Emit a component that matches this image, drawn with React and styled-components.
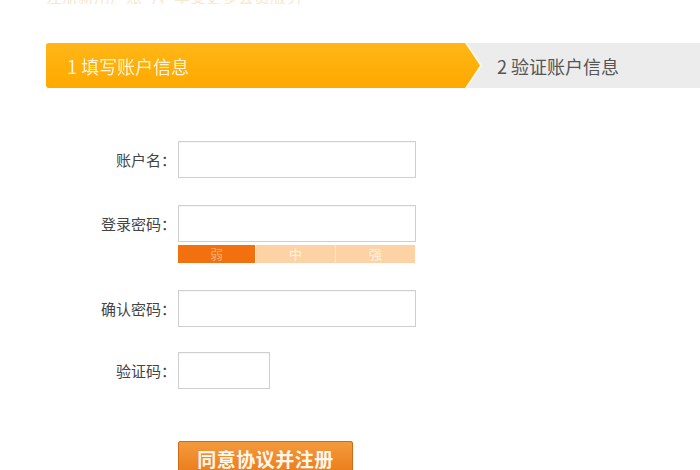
import React from "react";
import styled, { createGlobalStyle } from "styled-components";

const GlobalStyle = createGlobalStyle`
  html, body {
    margin: 0;
    padding: 0;
    background: #ffffff;
    font-family: "Noto Sans CJK SC", "Noto Sans", sans-serif;
  }
`;

const App = () => {
  return (
    <Page>
      <GlobalStyle />
      <TopHint>
        <TopHintText>注册新用户账号，享受更多会员服务</TopHintText>
      </TopHint>
      <StepBar>
        <ActiveWrap>
          <ActiveStep>1 填写账户信息</ActiveStep>
        </ActiveWrap>
        <NextStep>2 验证账户信息</NextStep>
      </StepBar>
      <Form>
        <Row>
          <Label>账户名：</Label>
          <Input type="text" />
        </Row>
        <Row $gap={27}>
          <Label>登录密码：</Label>
          <Input type="password" />
        </Row>
        <StrengthRow>
          <Strength>
            <Level $active>弱</Level>
            <Level>中</Level>
            <Level>强</Level>
          </Strength>
        </StrengthRow>
        <Row $gap={27}>
          <Label>确认密码：</Label>
          <Input type="password" />
        </Row>
        <Row $gap={25}>
          <Label>验证码：</Label>
          <Input type="text" $short />
        </Row>
        <Row $gap={52}>
          <Label />
          <SubmitButton>同意协议并注册</SubmitButton>
        </Row>
      </Form>
    </Page>
  );
};

export default App;

const Page = styled.div`
  width: 700px;
  height: 470px;
  overflow: hidden;
  display: flex;
  flex-direction: column;

  & > * {
    flex-shrink: 0;
  }
`;

const TopHint = styled.div`
  height: 4px;
  padding-left: 46px;
  display: flex;
  align-items: flex-end;
  overflow: hidden;
`;

const TopHintText = styled.div`
  font-size: 16px;
  line-height: 16px;
  color: #f9e8d0;
  white-space: nowrap;
`;

const StepBar = styled.div`
  margin: 39px 0 0 46px;
  height: 45px;
  display: flex;
  align-items: stretch;
  background: #ececec;
  border-radius: 3px 0 0 3px;
`;

const ActiveWrap = styled.div`
  width: 434px;
  filter: drop-shadow(1px 0 0 #fff6d8) drop-shadow(1px 0 0 #fffbea);
`;

const ActiveStep = styled.div`
  height: 100%;
  box-sizing: border-box;
  padding-left: 21px;
  display: flex;
  align-items: center;
  font-size: 18px;
  color: #fff3d6;
  background: linear-gradient(to bottom, #ffb716, #ffa800);
  border-radius: 3px 0 0 3px;
  clip-path: polygon(0 0, 419px 0, 100% 50%, 419px 100%, 0 100%);
`;

const NextStep = styled.div`
  padding-left: 17px;
  display: flex;
  align-items: center;
  font-size: 18px;
  color: #555555;
`;

const Form = styled.div`
  margin-top: 53px;
  display: flex;
  flex-direction: column;
`;

const Row = styled.div`
  display: flex;
  align-items: center;
  margin-top: ${({ $gap }) => ($gap ? `${$gap}px` : "0")};
`;

const Label = styled.div`
  width: 178px;
  box-sizing: border-box;
  padding-right: 2px;
  text-align: right;
  font-size: 15px;
  color: #444444;
  white-space: nowrap;
`;

const Input = styled.input`
  width: ${({ $short }) => ($short ? "92px" : "238px")};
  height: 37px;
  box-sizing: border-box;
  margin: 0;
  border: 1px solid #cfcfcf;
  background: #ffffff;
  outline: none;
  box-shadow: inset 0 1px 1px rgba(0, 0, 0, 0.04);
`;

const StrengthRow = styled.div`
  margin-top: 3px;
  padding-left: 178px;
`;

const Strength = styled.div`
  width: 237px;
  height: 18px;
  display: grid;
  grid-template-columns: 77px 79px 79px;
  column-gap: 1px;
  background: #fbe6cf;
`;

const Level = styled.div`
  display: flex;
  align-items: center;
  justify-content: center;
  font-size: 13px;
  line-height: 18px;
  background: ${({ $active }) => ($active ? "#f2700e" : "#fdd2a4")};
  color: ${({ $active }) => ($active ? "#f9aa6a" : "#fff3e4")};
`;

const SubmitButton = styled.button`
  width: 175px;
  height: 36px;
  box-sizing: border-box;
  padding: 0 0 2px;
  border: 1px solid #cf6a16;
  border-radius: 2px;
  background: linear-gradient(to bottom, #f49a3c, #ea7a17);
  color: #fff6ec;
  font-family: "Noto Sans CJK SC", sans-serif;
  font-size: 19px;
  font-weight: bold;
  letter-spacing: 0.5px;
  cursor: pointer;
`;
